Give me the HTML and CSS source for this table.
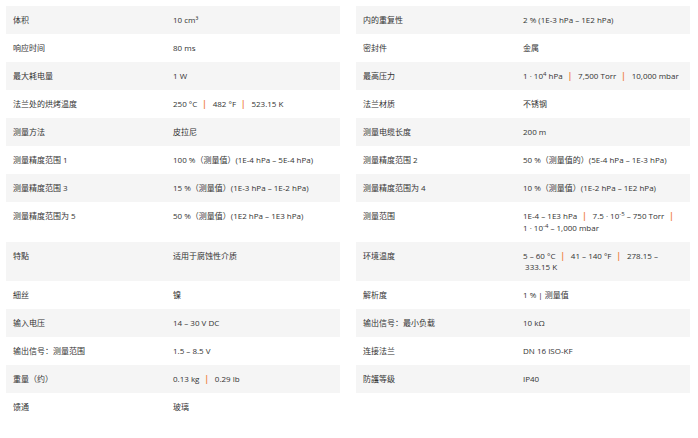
FILE: index.html
```html
<!DOCTYPE html>
<html lang="zh">
<head>
<meta charset="utf-8">
<link rel="stylesheet" href="styles.css">
</head>
<body>
<div class="specs">
  <div class="row alt"><div class="k">体积</div><div class="v">10 cm³</div></div>
  <div class="row alt"><div class="k">内的重复性</div><div class="v">2 % (1E-3 hPa – 1E2 hPa)</div></div>

  <div class="row"><div class="k">响应时间</div><div class="v">80 ms</div></div>
  <div class="row"><div class="k">密封件</div><div class="v">金属</div></div>

  <div class="row alt"><div class="k">最大耗电量</div><div class="v">1 W</div></div>
  <div class="row alt"><div class="k">最高压力</div><div class="v">1 · 10<sup>4</sup> hPa<span class="sep">|</span>7,500 Torr<span class="sep">|</span>10,000 mbar</div></div>

  <div class="row"><div class="k">法兰处的烘烤温度</div><div class="v">250 °C<span class="sep">|</span>482 °F<span class="sep">|</span>523.15 K</div></div>
  <div class="row"><div class="k">法兰材质</div><div class="v">不锈钢</div></div>

  <div class="row alt"><div class="k">测量方法</div><div class="v">皮拉尼</div></div>
  <div class="row alt"><div class="k">测量电缆长度</div><div class="v">200 m</div></div>

  <div class="row"><div class="k">测量精度范围 1</div><div class="v">100 %（测量值）(1E-4 hPa – 5E-4 hPa)</div></div>
  <div class="row"><div class="k">测量精度范围 2</div><div class="v">50 %（测量值的）(5E-4 hPa – 1E-3 hPa)</div></div>

  <div class="row alt"><div class="k">测量精度范围 3</div><div class="v">15 %（测量值）(1E-3 hPa – 1E-2 hPa)</div></div>
  <div class="row alt"><div class="k">测量精度范围为 4</div><div class="v">10 %（测量值）(1E-2 hPa – 1E2 hPa)</div></div>

  <div class="row"><div class="k">测量精度范围为 5</div><div class="v">50 %（测量值）(1E2 hPa – 1E3 hPa)</div></div>
  <div class="row"><div class="k">测量范围</div><div class="v">1E-4 – 1E3 hPa<span class="sep">|</span>7.5 · 10<sup>-5</sup> – 750 Torr<span class="sep">|</span><br>1 · 10<sup>-4</sup> – 1,000 mbar</div></div>

  <div class="row alt"><div class="k">特點</div><div class="v">适用于腐蚀性介质</div></div>
  <div class="row alt"><div class="k">环境温度</div><div class="v">5 – 60 °C<span class="sep">|</span>41 – 140 °F<span class="sep">|</span>278.15 –<br>&nbsp;333.15 K</div></div>

  <div class="row"><div class="k">細丝</div><div class="v">镍</div></div>
  <div class="row"><div class="k">解析度</div><div class="v">1 % | 测量值</div></div>

  <div class="row alt"><div class="k">输入电压</div><div class="v">14 – 30 V DC</div></div>
  <div class="row alt"><div class="k">输出信号：最小负载</div><div class="v">10 kΩ</div></div>

  <div class="row"><div class="k">输出信号：测量范围</div><div class="v">1.5 – 8.5 V</div></div>
  <div class="row"><div class="k">连接法兰</div><div class="v">DN 16 ISO-KF</div></div>

  <div class="row alt"><div class="k">重量（约）</div><div class="v">0.13 kg<span class="sep">|</span>0.29 lb</div></div>
  <div class="row alt"><div class="k">防護等级</div><div class="v">IP40</div></div>

  <div class="row"><div class="k">馈通</div><div class="v">玻璃</div></div>
</div>
</body>
</html>
```

FILE: styles.css
```css
html, body {
  margin: 0;
  background: #ffffff;
}
body {
  padding: 6px;
  font-family: "Open Sans", "Noto Sans CJK SC", sans-serif;
  font-size: 8px;
  line-height: 11.5px;
  color: #333333;
}
.specs {
  display: grid;
  grid-template-columns: 334px 334px;
  column-gap: 16px;
}
.row {
  display: grid;
  grid-template-columns: 167px 167px;
  background: #ffffff;
}
.row.alt {
  background: #f5f5f5;
}
.k, .v {
  padding: 8.25px 7px;
}
.v {
  padding-left: 0;
  padding-right: 0;
  white-space: nowrap;
}
.sep {
  color: #f08040;
  font-weight: 700;
  margin: 0 6px 0 5px;
}
sup {
  font-size: 6px;
  line-height: 0;
  vertical-align: 3px;
}
```
